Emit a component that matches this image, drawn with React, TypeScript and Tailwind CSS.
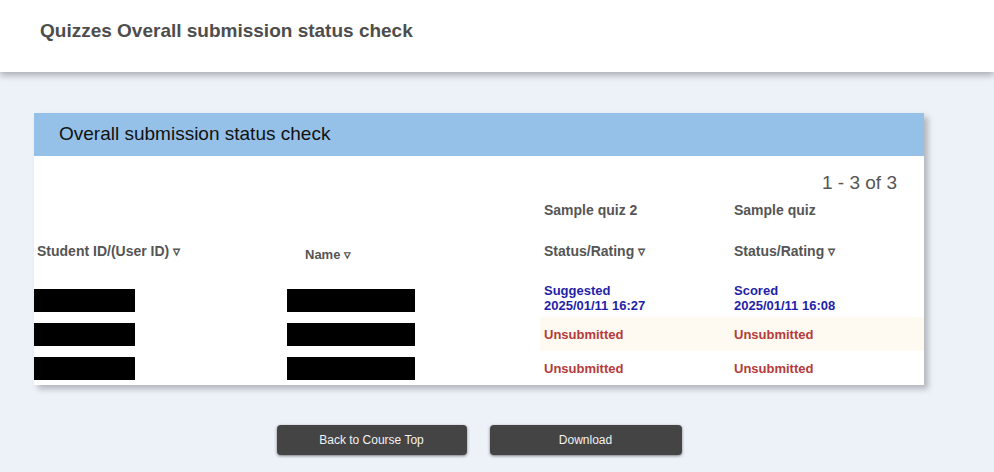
export default function App() {
  const rows = [
    { quiz2: { label: 'Suggested', date: '2025/01/11 16:27' }, quiz1: { label: 'Scored', date: '2025/01/11 16:08' } },
    { quiz2: null, quiz1: null, highlight: true },
    { quiz2: null, quiz1: null },
  ];

  return (
    <div className="min-h-screen bg-[#edf1f8] font-['Liberation_Sans',Arial,sans-serif]">
      <header className="h-[72px] bg-white shadow-[0_3px_7px_rgba(0,0,0,0.3)] relative z-10 flex items-center px-[40px]">
        <h1 className="text-[19px] font-bold text-[#4d4d4d] -mt-[10px]">Quizzes Overall submission status check</h1>
      </header>

      <div className="pt-[41px] pl-[34px]">
        <div className="w-[890px] bg-white shadow-[4px_4px_6px_rgba(0,0,0,0.25)]">
          <div className="h-[43px] bg-[#95c1e8] flex items-center px-[25px]">
            <h2 className="text-[19px] text-[#111]">Overall submission status check</h2>
          </div>

          <div className="flex justify-end pr-[27px] pt-[13px] h-[38px]">
            <span className="text-[19px] text-[#555]">1 - 3 of 3</span>
          </div>

          <div className="grid grid-cols-[253px_253px_190px_194px] text-[13px] font-bold text-[#555]">
            <div className="h-[32px]" />
            <div className="h-[32px]" />
            <div className="h-[32px] flex items-center pl-[4px] text-[14px]">Sample quiz 2</div>
            <div className="h-[32px] flex items-center pl-[4px] text-[14px]">Sample quiz</div>

            <div className="h-[50px] flex items-center pl-[3px] text-[14px]">Student ID/(User ID) ▿</div>
            <div className="h-[50px] flex items-center pl-[18px] pt-[8px] text-[13px]">Name ▿</div>
            <div className="h-[50px] flex items-center pl-[4px] text-[14px]">Status/Rating ▿</div>
            <div className="h-[50px] flex items-center pl-[4px] text-[14px]">Status/Rating ▿</div>

            <div className="col-span-4 h-[7px]" />

            {rows.map((r, i) => (
              <div key={i} className="contents">
                <div className="h-[34px] flex items-center">
                  <div className="w-[101px] h-[23px] bg-black" />
                </div>
                <div className="h-[34px] flex items-center">
                  <div className="w-[128px] h-[23px] bg-black" />
                </div>
                {[r.quiz2, r.quiz1].map((c, j) => (
                  <div
                    key={j}
                    className={`h-[34px] flex flex-col justify-center pl-[4px] leading-[15px] ${i === 0 ? 'pb-[4px]' : ''} ${r.highlight ? 'bg-[#fffaf1]' : ''}`}
                  >
                    {c ? (
                      <>
                        <span className="text-[#1f1fa8]">{c.label}</span>
                        <span className="text-[#1f1fa8]">{c.date}</span>
                      </>
                    ) : (
                      <span className="text-[#b53a3a]">Unsubmitted</span>
                    )}
                  </div>
                ))}
              </div>
            ))}
          </div>
        </div>

        <div className="w-[890px] flex justify-center gap-[23px] pt-[40px]">
          <button className="w-[190px] h-[30px] rounded-[4px] bg-[#444] text-[#f2f2f2] text-[12px] shadow-[0_1px_3px_rgba(0,0,0,0.5)]">
            Back to Course Top
          </button>
          <button className="w-[192px] h-[30px] rounded-[4px] bg-[#444] text-[#f2f2f2] text-[12px] shadow-[0_1px_3px_rgba(0,0,0,0.5)]">
            Download
          </button>
        </div>
      </div>
    </div>
  );
}
